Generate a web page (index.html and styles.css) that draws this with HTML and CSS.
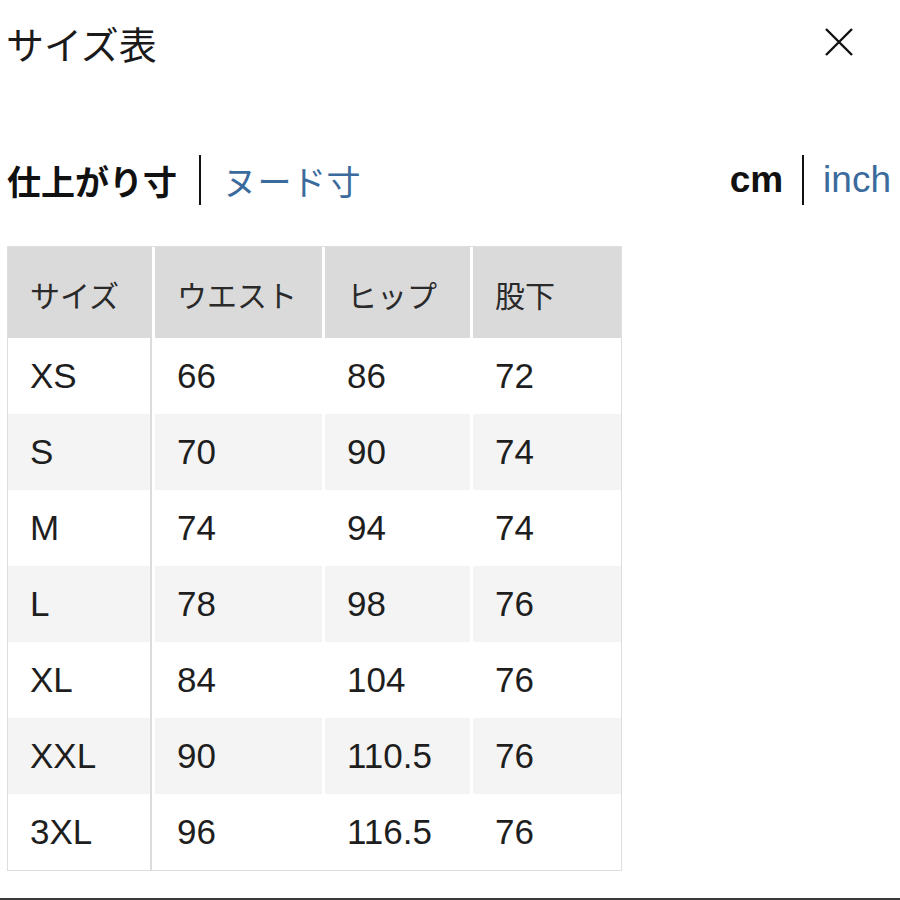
FILE: index.html
```html
<!DOCTYPE html>
<html lang="ja">
<head>
<meta charset="utf-8">
<title>サイズ表</title>
<link rel="stylesheet" href="styles.css">
</head>
<body>
<div class="page">
  <header class="top">
    <h1 class="title">サイズ表</h1>
    <button class="close" aria-label="閉じる">
      <svg width="28" height="28" viewBox="0 0 28 28"><path d="M1 1 L27 27 M27 1 L1 27" stroke="#111" stroke-width="2.4" fill="none"/></svg>
    </button>
  </header>
  <div class="tabs">
    <div class="toggle jp">
      <span class="on">仕上がり寸</span>
      <span class="sep"></span>
      <span class="off">ヌード寸</span>
    </div>
    <div class="toggle unit">
      <span class="on">cm</span>
      <span class="sep"></span>
      <span class="off">inch</span>
    </div>
  </div>
  <div class="table">
    <div class="cell head c1">サイズ</div><div class="cell head">ウエスト</div><div class="cell head">ヒップ</div><div class="cell head">股下</div>
    <div class="cell c1">XS</div><div class="cell">66</div><div class="cell">86</div><div class="cell">72</div>
    <div class="cell c1 alt">S</div><div class="cell alt">70</div><div class="cell alt">90</div><div class="cell alt">74</div>
    <div class="cell c1">M</div><div class="cell">74</div><div class="cell">94</div><div class="cell">74</div>
    <div class="cell c1 alt">L</div><div class="cell alt">78</div><div class="cell alt">98</div><div class="cell alt">76</div>
    <div class="cell c1">XL</div><div class="cell">84</div><div class="cell">104</div><div class="cell">76</div>
    <div class="cell c1 alt">XXL</div><div class="cell alt">90</div><div class="cell alt">110.5</div><div class="cell alt">76</div>
    <div class="cell c1">3XL</div><div class="cell">96</div><div class="cell">116.5</div><div class="cell">76</div>
  </div>
</div>
<div class="bottomline"></div>
</body>
</html>
```
FILE: styles.css
```css
html, body {
  margin: 0;
  padding: 0;
  background: #fff;
}
body {
  width: 900px;
  height: 900px;
  position: relative;
  overflow: hidden;
  font-family: "Liberation Sans", "Noto Sans CJK JP", sans-serif;
  color: #222;
}
.page {
  padding: 0 0 0 7px;
}
.top {
  display: flex;
  justify-content: space-between;
  align-items: center;
  height: 86px;
  padding-right: 47px;
}
.title {
  margin: 0;
  font-family: "Noto Sans CJK JP", sans-serif;
  font-weight: 400;
  font-size: 38px;
  line-height: 1;
  color: #1a1a1a;
  margin-left: -1px;
}
.close {
  border: 0;
  background: none;
  padding: 0;
  width: 28px;
  height: 28px;
  display: flex;
  margin-top: -2px;
}
.tabs {
  display: flex;
  justify-content: space-between;
  align-items: center;
  height: 52px;
  margin-top: 68px;
  padding-right: 9px;
}
.toggle {
  display: flex;
  align-items: center;
  gap: 20px;
}
.toggle .sep {
  width: 2px;
  height: 50px;
  background: #111;
}
.jp {
  font-family: "Noto Sans CJK JP", sans-serif;
  font-size: 34px;
  gap: 22px;
}
.jp .on {
  font-weight: 700;
  color: #111;
}
.jp .off {
  color: #3a6b9c;
  font-weight: 400;
  letter-spacing: 0.5px;
}
.unit {
  font-family: "Liberation Sans", sans-serif;
  font-size: 37px;
  gap: 19px;
}
.unit .on {
  font-weight: 700;
  color: #111;
}
.unit .off {
  color: #3a6b9c;
}
.table {
  margin-top: 40px;
  width: 613px;
  border: 1px solid #dedede;
  display: grid;
  grid-template-columns: 144px 167px 145px 148px;
  grid-template-rows: 91px repeat(7, 76px);
  column-gap: 3px;
  background: #fff;
}
.cell {
  display: flex;
  align-items: center;
  padding-left: 22px;
  font-size: 35px;
  color: #1e1e1e;
  background: #fff;
}
.cell.alt {
  background: #f4f4f4;
}
.cell.head {
  background: #dadada;
  font-family: "Noto Sans CJK JP", sans-serif;
  font-size: 30px;
  color: #2a2a2a;
  padding-top: 2px;
}
.cell.c1 {
  border-right: 2px solid #dcdcdc;
}
.cell.head.c1 {
  border-right-color: #dadada;
}
.bottomline {
  position: absolute;
  left: 0;
  right: 0;
  bottom: 0;
  height: 2px;
  background: #3a3a3a;
}
```
